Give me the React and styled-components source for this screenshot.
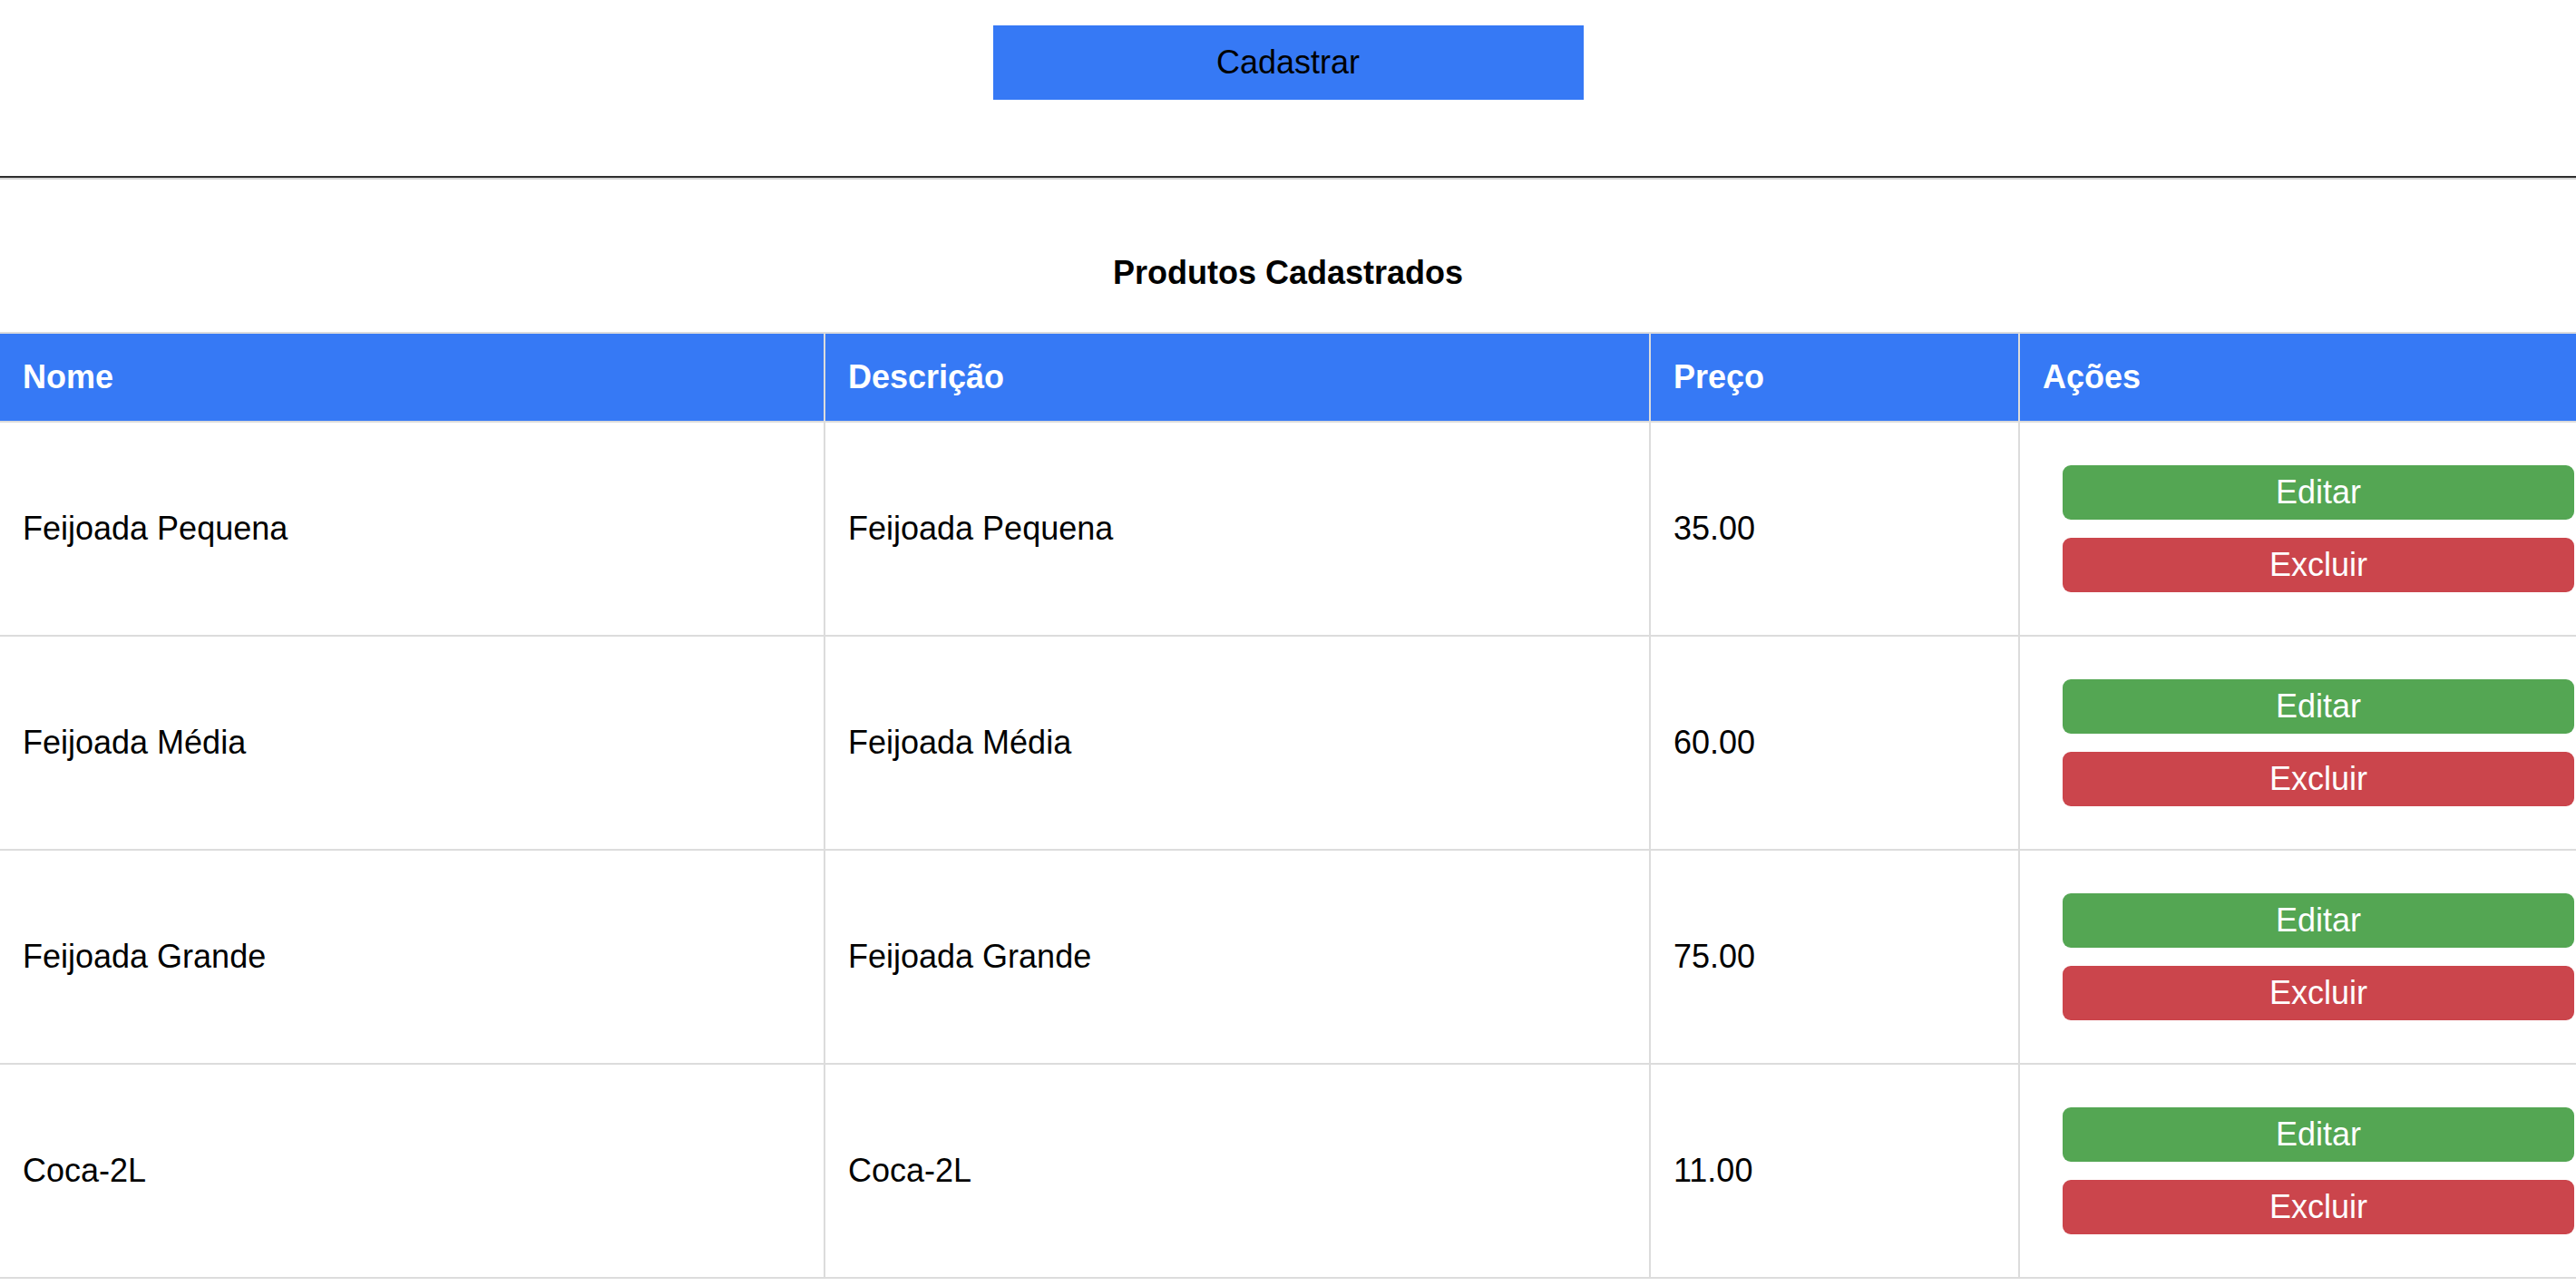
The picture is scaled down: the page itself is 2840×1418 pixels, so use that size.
import React from 'react';
import styled, { createGlobalStyle } from 'styled-components';

const GlobalStyle = createGlobalStyle`
  html, body {
    margin: 0;
    padding: 0;
    background: #ffffff;
  }
  body {
    font-family: "Liberation Sans", Arial, Helvetica, sans-serif;
    color: #000;
  }
`;

const Page = styled.div`
  width: 2840px;
  background: #fff;
`;

const TopBar = styled.div`
  display: flex;
  justify-content: center;
  align-items: flex-start;
  padding-top: 28px;
  height: 194px;
  box-sizing: border-box;
`;

const RegisterButton = styled.button`
  width: 651px;
  height: 82px;
  background-color: #3679f5;
  border: none;
  border-radius: 0;
  color: #000;
  font-family: "Liberation Sans", Arial, sans-serif;
  font-size: 36px;
  cursor: pointer;
`;

const Divider = styled.div`
  height: 0;
  border-top: 2px solid #2e2e2e;
  border-bottom: 2px solid #d4d4d4;
`;

const Title = styled.h3`
  margin: 82px 0 44px;
  font-size: 36px;
  line-height: 42px;
  font-weight: bold;
  text-align: center;
`;

const Table = styled.div`
  width: 2840px;
  border-top: 2px solid #dcdcdc;
`;

const Row = styled.div`
  display: grid;
  grid-template-columns: 910px 910px 407px 1fr;
  height: ${p => (p.$head ? '98px' : '236px')};
  background: ${p => (p.$head ? '#3679f5' : '#fff')};
  border-bottom: 2px solid #dcdcdc;
  box-sizing: border-box;
`;

const Cell = styled.div`
  display: flex;
  align-items: center;
  box-sizing: border-box;
  padding: 0 24px 0 25px;
  border-right: ${p => (p.$last ? 'none' : '2px solid #dcdcdc')};
  font-size: 36px;
  font-weight: ${p => (p.$head ? 'bold' : 'normal')};
  color: ${p => (p.$head ? '#fff' : '#000')};
  white-space: nowrap;
`;

const Actions = styled.div`
  display: flex;
  flex-direction: column;
  justify-content: center;
  gap: 20px;
  padding: 0 2px 0 47px;
`;

const ActionButton = styled.button`
  height: 60px;
  width: 100%;
  border: none;
  border-radius: 9px;
  background-color: ${p => (p.$danger ? '#cb454c' : '#54a653')};
  color: #fff;
  font-family: "Liberation Sans", Arial, sans-serif;
  font-size: 36px;
  cursor: pointer;
`;

const produtos = [
  { nome: 'Feijoada Pequena', descricao: 'Feijoada Pequena', preco: 35 },
  { nome: 'Feijoada Média', descricao: 'Feijoada Média', preco: 60 },
  { nome: 'Feijoada Grande', descricao: 'Feijoada Grande', preco: 75 },
  { nome: 'Coca-2L', descricao: 'Coca-2L', preco: 11 },
];

function App() {
  return (
    <Page>
      <GlobalStyle />
      <TopBar>
        <RegisterButton>Cadastrar</RegisterButton>
      </TopBar>
      <Divider />
      <Title>Produtos Cadastrados</Title>
      <Table>
        <Row $head>
          <Cell $head>Nome</Cell>
          <Cell $head>Descrição</Cell>
          <Cell $head>Preço</Cell>
          <Cell $head $last>Ações</Cell>
        </Row>
        {produtos.map(p => (
          <Row key={p.nome}>
            <Cell>{p.nome}</Cell>
            <Cell>{p.descricao}</Cell>
            <Cell>{p.preco.toFixed(2)}</Cell>
            <Actions>
              <ActionButton>Editar</ActionButton>
              <ActionButton $danger>Excluir</ActionButton>
            </Actions>
          </Row>
        ))}
      </Table>
    </Page>
  );
}

export default App;
